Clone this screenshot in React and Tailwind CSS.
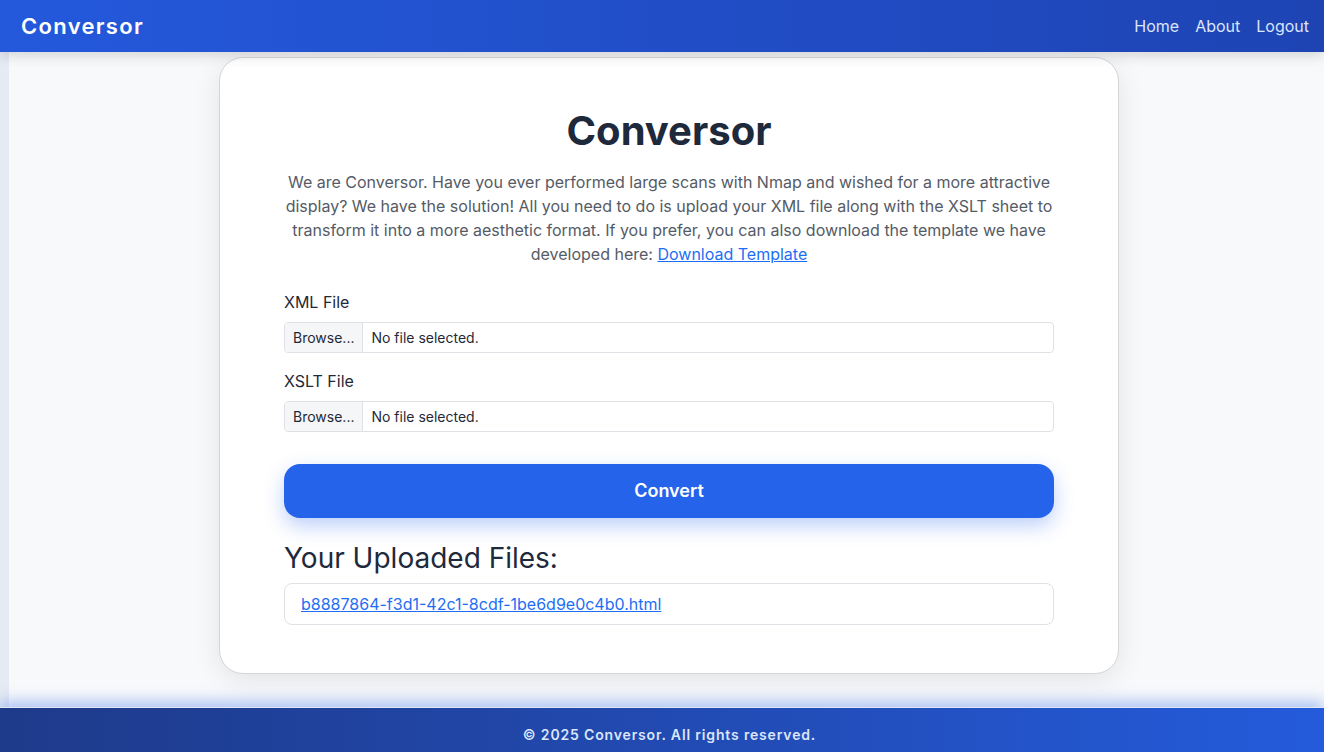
import React from 'react'

function FileField({ label }) {
  return (
    <div>
      <label className="block text-base leading-6 text-[#1f2937] mb-2">{label}</label>
      <div className="flex h-[31px] rounded-[4px] border border-[#dee2e6] overflow-hidden text-sm text-[#1f2937] bg-white">
        <div className="flex items-center px-2 bg-[#f5f6f8] border-r border-[#dee2e6]">Browse...</div>
        <div className="flex items-center px-2">No file selected.</div>
      </div>
    </div>
  )
}

export default function App() {
  return (
    <div className="h-screen flex flex-col bg-[#f8f9fb] font-['Inter',sans-serif]">
      {/* Header */}
      <header className="relative z-10 h-[52px] flex items-center justify-between pl-[21px] pr-[15px] bg-gradient-to-r from-[#2459dc] to-[#1e44b4] shadow-[0_4px_12px_rgba(0,0,0,0.14)]">
        <span className="text-[22px] font-semibold tracking-[0.06em] text-white">Conversor</span>
        <nav className="flex items-center gap-4 text-base text-[#dbe5fb]">
          <a>Home</a>
          <a>About</a>
          <a>Logout</a>
        </nav>
      </header>

      {/* Main */}
      <main className="flex-1 flex min-h-0">
        <div className="w-[9px] bg-[#e6eaf3]" />
        <div className="flex-1 flex justify-center pl-[5px] pt-[5px]">
          <div className="w-[900px] h-[617px] bg-white border border-[#d4d6da] rounded-[24px] shadow-[0_6px_28px_rgba(0,0,0,0.09)] px-[64px] pt-[49px] pb-[48px]">
            <h1 className="text-center text-[40px] leading-[48px] font-bold text-[#1e293b]">Conversor</h1>
            <p className="mt-[15px] text-center text-base leading-6 text-[#555b66]">
              We are Conversor. Have you ever performed large scans with Nmap and wished for a more attractive display? We have the solution! All you need to do is upload your XML file along with the XSLT sheet to transform it into a more aesthetic format. If you prefer, you can also download the template we have developed here:{' '}
              <a className="text-[#1d6ef5] underline">Download Template</a>
            </p>

            <div className="mt-6 flex flex-col gap-4">
              <FileField label="XML File" />
              <FileField label="XSLT File" />
            </div>

            <button className="mt-8 w-full h-[54px] rounded-2xl bg-[#2563eb] text-white text-lg font-semibold shadow-[0_8px_20px_rgba(37,99,235,0.3)]">
              Convert
            </button>

            <h2 className="mt-[23px] text-[28px] leading-[34px] text-[#1e293b]">Your Uploaded Files:</h2>
            <div className="mt-2 h-[42px] flex items-center px-4 border border-[#dee2e6] rounded-lg">
              <a className="text-base text-[#1d6ef5] underline">b8887864-f3d1-42c1-8cdf-1be6d9e0c4b0.html</a>
            </div>
          </div>
        </div>
      </main>

      {/* Footer */}
      <footer className="relative h-[45px] flex justify-center pl-[15px] pt-[17px] border-t border-[#e3e6ee] bg-gradient-to-r from-[#1e3a8a] to-[#245bdb] shadow-[0_-6px_14px_rgba(37,99,235,0.35)]">
        <span className="text-sm leading-5 font-semibold tracking-[0.06em] text-[#dbe5fb]">© 2025 Conversor. All rights reserved.</span>
      </footer>
    </div>
  )
}
